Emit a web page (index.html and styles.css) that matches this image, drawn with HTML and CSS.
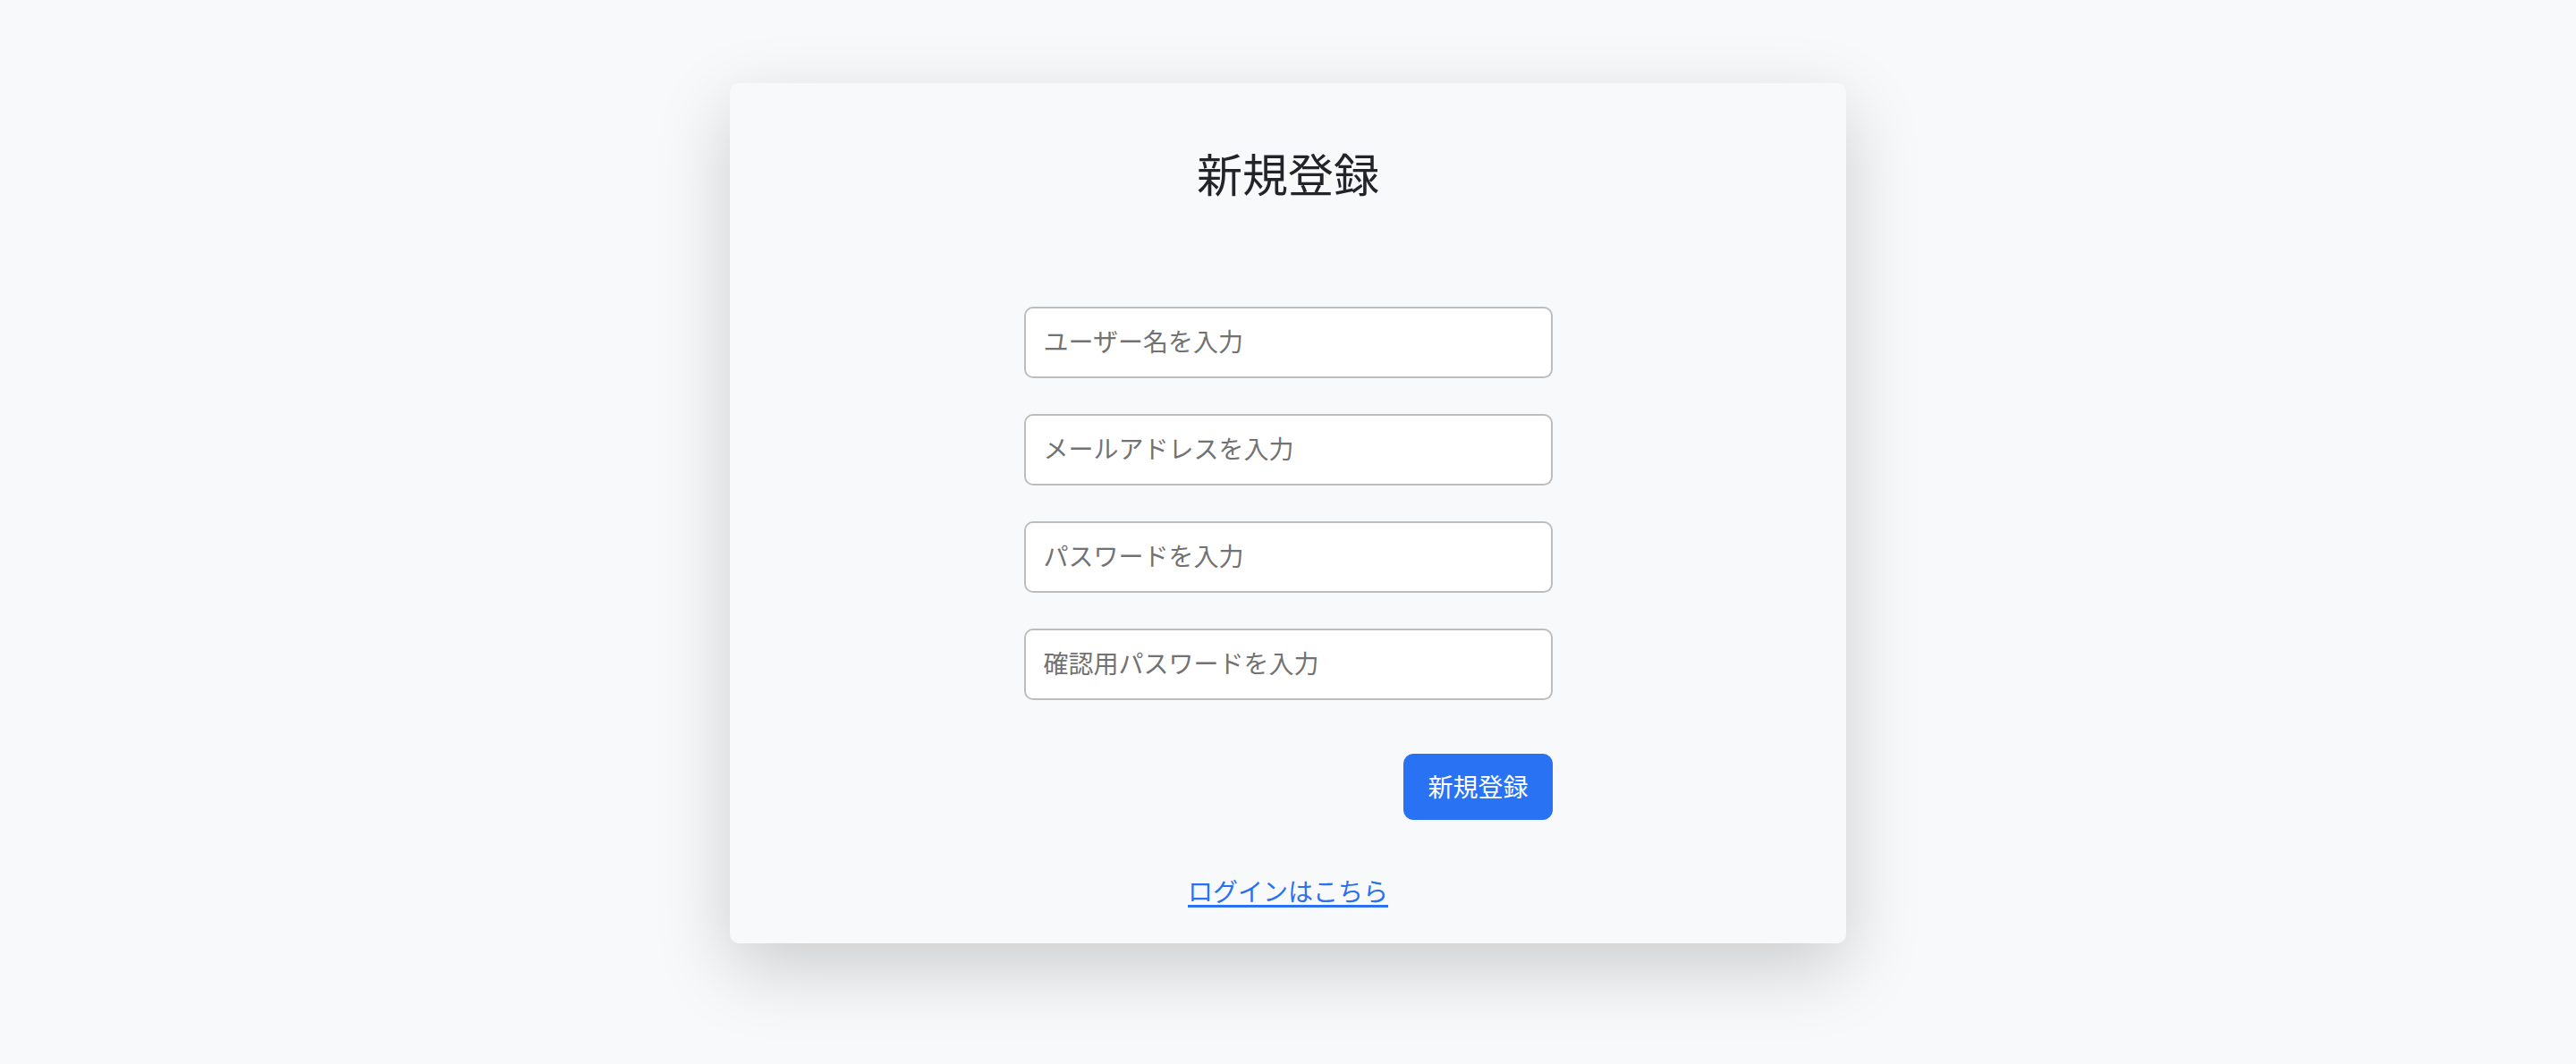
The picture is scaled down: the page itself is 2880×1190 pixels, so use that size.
FILE: index.html
```html
<!DOCTYPE html>
<html lang="ja">
<head>
<meta charset="utf-8">
<title>新規登録</title>
<link rel="stylesheet" href="styles.css">
</head>
<body>
<main class="page">
  <section class="card">
    <h3 class="title">新規登録</h3>
    <form class="form">
      <input class="field" type="text" placeholder="ユーザー名を入力">
      <input class="field" type="email" placeholder="メールアドレスを入力">
      <input class="field" type="password" placeholder="パスワードを入力">
      <input class="field" type="password" placeholder="確認用パスワードを入力">
      <div class="actions">
        <button class="btn" type="button">新規登録</button>
      </div>
    </form>
    <a class="login-link" href="#">ログインはこちら</a>
  </section>
</main>
</body>
</html>
```
FILE: styles.css
```css
html, body {
  margin: 0;
  padding: 0;
}
body {
  background: #f8f9fa;
  font-family: "Noto Sans CJK JP", "Noto Sans", sans-serif;
  color: #212529;
  min-height: 100vh;
}
.page {
  display: flex;
  justify-content: center;
  padding-top: 93px;
}
.card {
  box-sizing: border-box;
  width: 1248px;
  background: #f8f9fa;
  border-radius: 10px;
  box-shadow: 0 28px 84px rgba(0, 0, 0, 0.18);
  padding: 70px 0 38px;
  display: flex;
  flex-direction: column;
  align-items: center;
}
.title {
  margin: 0;
  font-size: 51px;
  line-height: 60px;
  font-weight: 400;
  color: #212529;
}
.form {
  width: 591px;
  margin-top: 120px;
  display: flex;
  flex-direction: column;
  gap: 40px;
}
.field {
  box-sizing: border-box;
  width: 100%;
  height: 80px;
  margin: 0;
  padding: 0 20px 5px;
  border: 2px solid #bdbdbd;
  border-radius: 10px;
  background: #fff;
  font-family: "Noto Sans CJK JP", "Noto Sans", sans-serif;
  font-size: 28px;
  color: #212529;
  outline: none;
}
.field::placeholder {
  color: #727272;
  opacity: 1;
}
.actions {
  display: flex;
  justify-content: flex-end;
  margin-top: 20px;
}
.btn {
  box-sizing: border-box;
  height: 74px;
  padding: 0 26px 2px;
  border: 1px solid #2972f3;
  border-radius: 11px;
  background: #2972f3;
  color: #fff;
  font-family: "Noto Sans CJK JP", "Noto Sans", sans-serif;
  font-size: 28px;
  line-height: 42px;
}
.login-link {
  margin-top: 58px;
  font-size: 28px;
  line-height: 42px;
  color: #2a70f0;
  text-decoration: underline;
  text-decoration-thickness: 3px;
  text-underline-offset: 4px;
}
```
